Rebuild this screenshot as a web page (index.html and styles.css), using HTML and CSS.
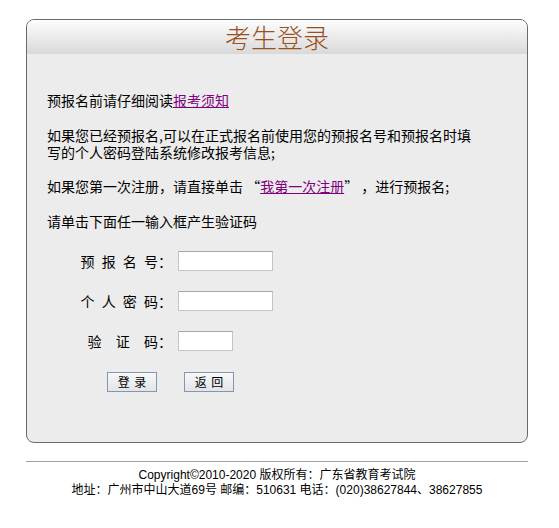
FILE: index.html
```html
<!DOCTYPE html>
<html lang="zh-CN">
<head>
<meta charset="utf-8">
<title>考生登录</title>
<link rel="stylesheet" href="styles.css">
</head>
<body>
<div class="page">
  <div class="box">
    <div class="box-head"><h1 class="title">考生登录</h1></div>
    <div class="box-body">
      <div class="content">
        <p class="para">预报名前请仔细阅读<a href="#" class="link">报考须知</a></p>
        <p class="para">如果您已经预报名,可以在正式报名前使用您的预报名号和预报名时填写的个人密码登陆系统修改报考信息;</p>
        <p class="para">如果您第一次注册，请直接单击 “<a href="#" class="link">我第一次注册</a>” ，进行预报名;</p>
        <p class="para">请单击下面任一输入框产生验证码</p>
      </div>
      <div class="form">
        <label class="lbl">预 报 名 号：</label><input class="inp inp-wide" type="text">
        <label class="lbl">个 人 密 码：</label><input class="inp inp-wide" type="password">
        <label class="lbl">验&nbsp;&nbsp;证&nbsp;&nbsp;码：</label><input class="inp inp-short" type="text">
      </div>
      <div class="btns">
        <button class="btn" type="button">登 录</button>
        <button class="btn" type="button">返 回</button>
      </div>
    </div>
  </div>
  <div class="footer">
    <div class="footer-line">Copyright©2010-2020 版权所有：广东省教育考试院</div>
    <div class="footer-line">地址：广州市中山大道69号 邮编：510631 电话：(020)38627844、38627855</div>
  </div>
</div>
</body>
</html>
```

FILE: styles.css
```css
html, body {
  margin: 0;
  padding: 0;
  background: #ffffff;
}

body {
  font-family: "Noto Sans CJK SC", "Noto Sans", sans-serif;
  font-size: 14px;
  color: #000;
}

.page {
  width: 502px;
  margin-left: 26px;
  padding-top: 19px;
}

.box {
  border: 1px solid #6a6a6a;
  border-radius: 8px;
  background: #ececec;
  overflow: hidden;
}

.box-head {
  height: 34px;
  background: linear-gradient(#fdfdfd, #d9d9d9);
  display: flex;
  align-items: center;
  justify-content: center;
}

.title {
  margin: 0;
  font-size: 26px;
  font-weight: 300;
  line-height: 34px;
  color: #9a4f1c;
}

.box-body {
  padding: 38px 20px 50px;
}

.content {
  width: 432px;
}

.para {
  margin: 0 0 17.5px;
  line-height: 17px;
}

.para:last-child {
  margin-bottom: 0;
}

.link {
  color: #800080;
  text-decoration: underline;
}

.form {
  margin-top: 21px;
  display: grid;
  grid-template-columns: 125px auto;
  column-gap: 6px;
  row-gap: 20px;
  align-items: center;
  justify-items: start;
}

.lbl {
  justify-self: end;
  line-height: 20px;
  word-spacing: 4px;
}

.inp {
  box-sizing: border-box;
  height: 20px;
  margin: 0;
  padding: 0 2px;
  border: 1px solid #c4c4c4;
  border-top-color: #a8a8a8;
  background: #fff;
  font: inherit;
}

.inp-wide {
  width: 95px;
}

.inp-short {
  width: 55px;
}

.btns {
  margin-top: 21px;
  padding-left: 60px;
  display: flex;
  gap: 27px;
}

.btn {
  box-sizing: border-box;
  width: 50px;
  height: 20px;
  margin: 0;
  padding: 0;
  border: 1px solid #8396ad;
  background: linear-gradient(#f8f8f8, #e2e4e8);
  font-family: "Noto Sans CJK SC", sans-serif;
  font-size: 12px;
  line-height: 18px;
  word-spacing: 2px;
  color: #000;
}

.footer {
  margin-top: 18px;
  border-top: 1px solid #a3a3a3;
  padding-top: 6px;
  text-align: center;
  font-family: "Liberation Sans", "Noto Sans CJK SC", sans-serif;
  font-size: 12px;
  line-height: 15px;
}
```
